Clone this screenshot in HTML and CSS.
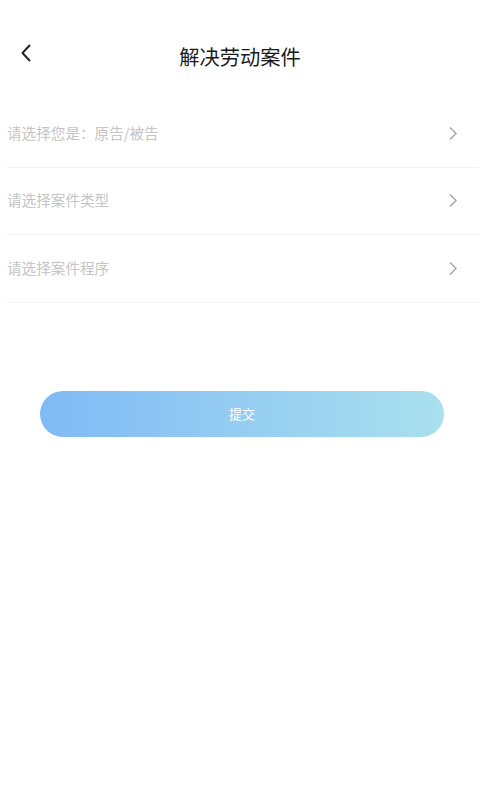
FILE: index.html
```html
<!DOCTYPE html>
<html lang="zh">
<head>
<meta charset="utf-8">
<link rel="stylesheet" href="styles.css">
</head>
<body>
<div class="page">
  <header class="nav">
    <span class="back">
      <svg width="12" height="18" viewBox="0 0 12 18"><path d="M9.5 1.5 L2.5 9 L9.5 16.5" fill="none" stroke="#222" stroke-width="1.9" stroke-linecap="round" stroke-linejoin="round"/></svg>
    </span>
    <h1 class="title">解决劳动案件</h1>
  </header>
  <div class="list">
    <div class="row"><span class="label">请选择您是：原告/被告</span><svg class="arrow" width="10" height="15" viewBox="0 0 10 15"><path d="M2 1.5 L8 7.5 L2 13.5" fill="none" stroke="#a3a3a3" stroke-width="1.4"/></svg></div>
    <div class="row"><span class="label">请选择案件类型</span><svg class="arrow" width="10" height="15" viewBox="0 0 10 15"><path d="M2 1.5 L8 7.5 L2 13.5" fill="none" stroke="#a3a3a3" stroke-width="1.4"/></svg></div>
    <div class="row"><span class="label">请选择案件程序</span><svg class="arrow" width="10" height="15" viewBox="0 0 10 15"><path d="M2 1.5 L8 7.5 L2 13.5" fill="none" stroke="#a3a3a3" stroke-width="1.4"/></svg></div>
  </div>
  <div class="actions">
    <button class="submit">提交</button>
  </div>
</div>
</body>
</html>
```
FILE: styles.css
```css
* { box-sizing: border-box; }
html, body { margin: 0; padding: 0; background: #fff; }
body {
  font-family: "Noto Sans CJK SC", "Noto Sans", sans-serif;
  width: 480px;
  height: 800px;
}
.page { display: flex; flex-direction: column; }
.nav {
  height: 100px;
  position: relative;
  display: flex;
  align-items: flex-start;
  justify-content: center;
  padding-top: 40px;
}
.back {
  position: absolute;
  left: 20px;
  top: 44px;
  display: flex;
}
.title {
  margin: 0;
  font-size: 20.3px;
  font-weight: 400;
  color: #1a1a1a;
  line-height: 32px;
}
.list { display: flex; flex-direction: column; padding: 0 2px 0 6px; }
.row {
  height: 67.5px;
  display: flex;
  align-items: center;
  justify-content: space-between;
  border-bottom: 1px solid #f2f2f2;
  padding: 0 20px 0 1px;
}
.row .label {
  font-size: 14.6px;
  color: #c5c5c5;
  line-height: 20px;
  margin-top: -1px;
}
.arrow { display: block; margin-top: 0; }
.actions { padding: 88px 36px 0 40px; }
.submit {
  width: 404px;
  height: 46px;
  border: none;
  border-radius: 23px;
  background: linear-gradient(90deg, #7fbaf5 0%, #93cbf2 45%, #a9e0ee 100%);
  color: #fff;
  font-family: "Noto Sans CJK SC", "Noto Sans", sans-serif;
  font-size: 13px;
  display: flex;
  align-items: center;
  justify-content: center;
  padding: 0;
}
```
